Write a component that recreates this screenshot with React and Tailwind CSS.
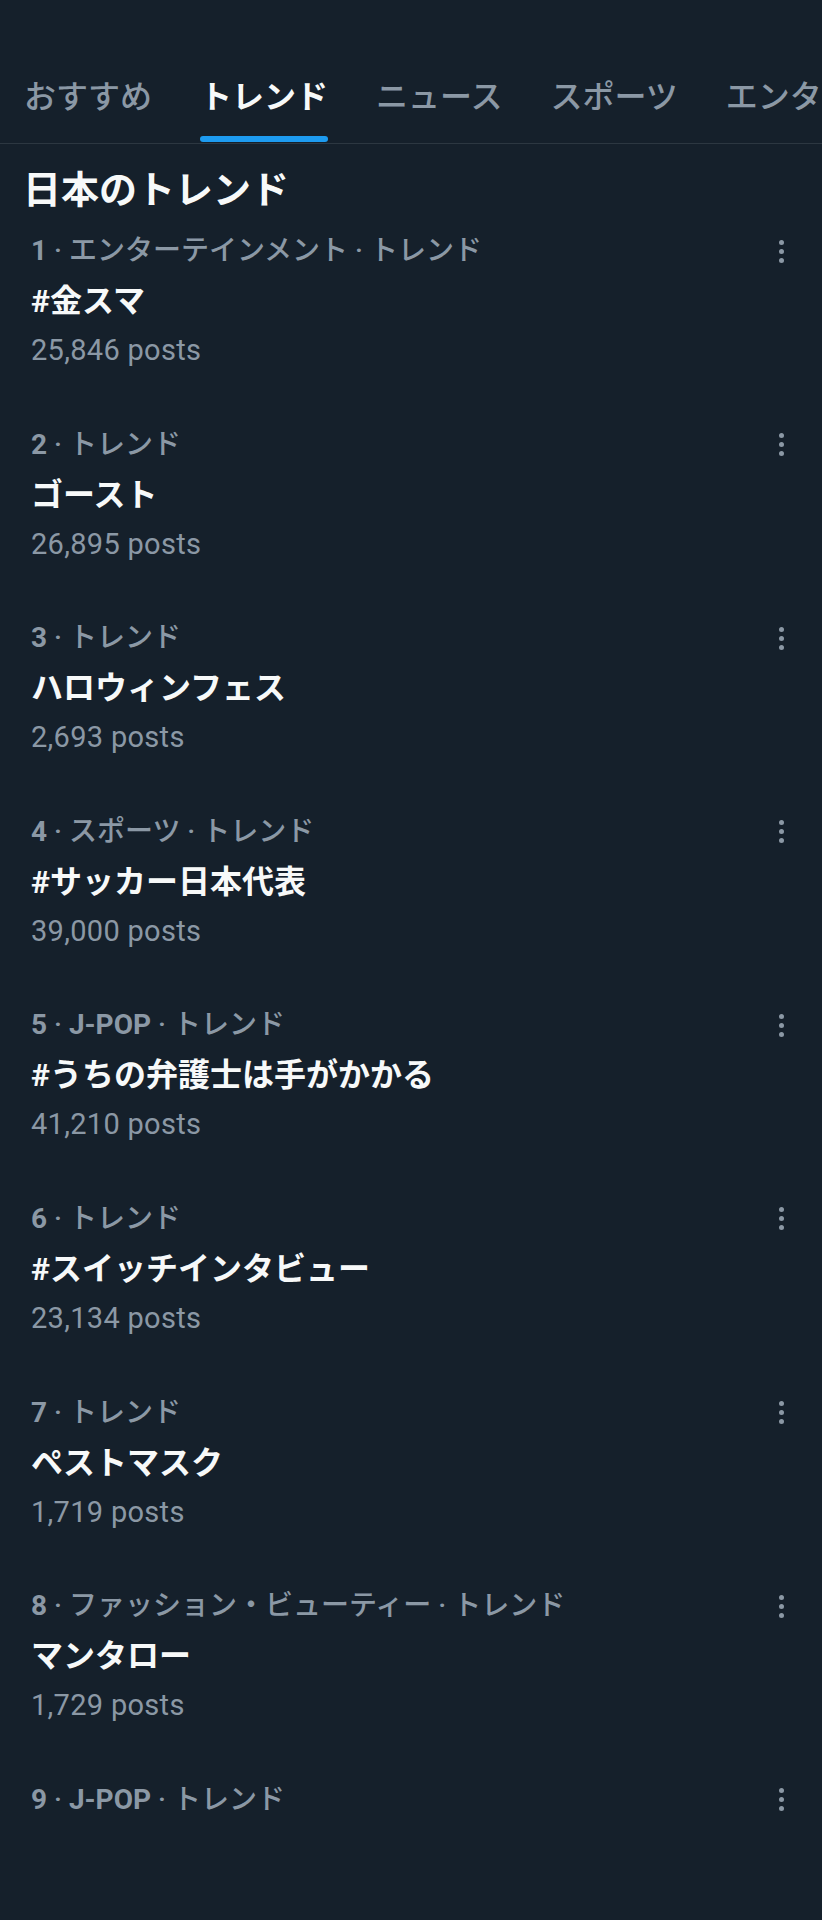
import React from 'react'

const tabs = ['おすすめ', 'トレンド', 'ニュース', 'スポーツ', 'エンターテイメント']

const trends = [
  { rank: 1, cat: 'エンターテインメント', name: '#金スマ', posts: '25,846' },
  { rank: 2, cat: null, name: 'ゴースト', posts: '26,895' },
  { rank: 3, cat: null, name: 'ハロウィンフェス', posts: '2,693' },
  { rank: 4, cat: 'スポーツ', name: '#サッカー日本代表', posts: '39,000' },
  { rank: 5, cat: 'J-POP', latin: true, name: '#うちの弁護士は手がかかる', posts: '41,210' },
  { rank: 6, cat: null, name: '#スイッチインタビュー', posts: '23,134' },
  { rank: 7, cat: null, name: 'ペストマスク', posts: '1,719' },
  { rank: 8, cat: 'ファッション・ビューティー', name: 'マンタロー', posts: '1,729' },
  { rank: 9, cat: 'J-POP', latin: true, name: null, posts: null },
]

function MoreDots() {
  return (
    <div className="flex flex-col items-center gap-[4px]">
      <span className="block w-[5px] h-[5px] rounded-full bg-[#8b98a5]" />
      <span className="block w-[5px] h-[5px] rounded-full bg-[#8b98a5]" />
      <span className="block w-[5px] h-[5px] rounded-full bg-[#8b98a5]" />
    </div>
  )
}

function TrendRow({ t }) {
  return (
    <div className="h-[193.6px] pl-[31px] pr-[38px]">
      <div className="flex items-center justify-between h-[36px]">
        <span className="text-[28px] leading-[36px] font-medium text-[#8b98a5] whitespace-nowrap">
          <span className="font-bold">{t.rank}</span>
          {' · '}
          {t.cat && (
            <>
              <span className={t.latin ? 'font-bold' : ''}>{t.cat}</span>
              {' · '}
            </>
          )}
          トレンド
        </span>
        <MoreDots />
      </div>
      {t.name && (
        <div className="text-[32px] leading-[64px] font-bold text-[#f7f9f9] whitespace-nowrap">{t.name}</div>
      )}
      {t.posts && (
        <div className="text-[29px] leading-[34px] tracking-[0.3px] text-[#8b98a5]">{t.posts} posts</div>
      )}
    </div>
  )
}

export default function App() {
  return (
    <div
      className="w-[822px] h-[1920px] overflow-hidden bg-[#15202b]"
      style={{ fontFamily: 'Roboto, "Noto Sans CJK JP", sans-serif' }}
    >
      {/* tab bar */}
      <div className="flex h-[144px] pt-[77px] border-b border-[#2c3741] overflow-hidden">
        {tabs.map((label, i) => (
          <div key={label} className="flex flex-col px-[24px] shrink-0">
            <span
              className={
                'text-[32px] leading-[40px] whitespace-nowrap ' +
                (i === 1 ? 'font-bold text-[#f7f9f9]' : 'font-medium text-[#8b98a5]')
              }
            >
              {label}
            </span>
            <div className={'mt-[19px] h-[6px] rounded-full ' + (i === 1 ? 'bg-[#1d9bf0]' : 'bg-transparent')} />
          </div>
        ))}
      </div>

      <h2 className="mt-[22px] pl-[23px] text-[38px] leading-[48px] font-bold text-[#f7f9f9]">日本のトレンド</h2>

      <div className="mt-[19px]">
        {trends.map((t) => (
          <TrendRow key={t.rank} t={t} />
        ))}
      </div>
    </div>
  )
}
